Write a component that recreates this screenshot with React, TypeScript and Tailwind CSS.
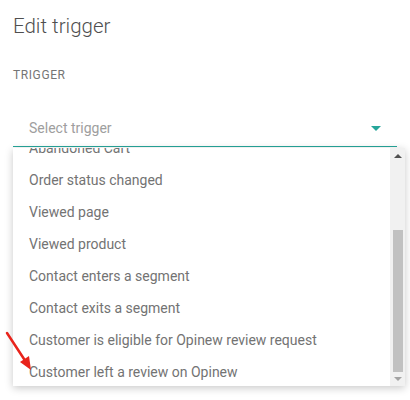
import React from "react";

const items = [
  "Abandoned Cart",
  "Order status changed",
  "Viewed page",
  "Viewed product",
  "Contact enters a segment",
  "Contact exits a segment",
  "Customer is eligible for Opinew review request",
  "Customer left a review on Opinew",
];

export default function App() {
  return (
    <div
      className="relative w-[410px] h-[400px] bg-white overflow-hidden"
      style={{ fontFamily: "Roboto, 'Liberation Sans', sans-serif" }}
    >
      <div className="px-[13px] pt-[14px]">
        <div className="text-[20.5px] leading-[24px] font-light text-[#4f4f4f]">Edit trigger</div>
        <div className="mt-[29px] text-[12px] leading-[16px] tracking-[0.6px] text-[#757575]">TRIGGER</div>
        <div className="mt-[27px] h-[37px] flex items-center justify-between border-b border-[#26a69a] pl-[16px] pr-[16px]">
          <span className="text-[14px] leading-[20px] text-[#9e9e9e]">Select trigger</span>
          <svg width="10" height="5" viewBox="0 0 10 5" className="mt-[1px]">
            <polygon points="0,0 10,0 5,5" fill="#26a69a" />
          </svg>
        </div>
      </div>

      {/* dropdown panel */}
      <div className="absolute left-[13px] top-[148px] w-[392px] h-[238px] bg-white flex shadow-[0_2px_8px_rgba(0,0,0,0.22)]">
        <div className="flex-1 overflow-hidden">
          <div className="mt-[-16px]">
            {items.map((t) => (
              <div key={t} className="h-[32px] pl-[16px] text-[14px] leading-[32px] text-[#737373] whitespace-nowrap">
                {t}
              </div>
            ))}
          </div>
        </div>
        <div className="w-[15px] h-full bg-[#f1f1f1] flex flex-col items-center">
          <div className="h-[15px] w-full flex items-center justify-center">
            <svg width="8" height="4" viewBox="0 0 8 4">
              <polygon points="0,4 8,4 4,0" fill="#505050" />
            </svg>
          </div>
          <div className="mt-[67px] h-[142px] w-[10px] bg-[#c1c1c1]" />
          <div className="flex-1 w-full flex items-center justify-center">
            <svg width="8" height="4" viewBox="0 0 8 4">
              <polygon points="0,0 8,0 4,4" fill="#a3a3a3" />
            </svg>
          </div>
        </div>
      </div>

      {/* red annotation arrow */}
      <svg className="absolute left-0 top-0 pointer-events-none" width="410" height="400">
        <line x1="7" y1="333" x2="26" y2="362" stroke="#e8231b" strokeWidth="2.5" strokeLinecap="round" />
        <polygon points="31,370 20,362 29,356" fill="#e8231b" />
      </svg>
    </div>
  );
}
